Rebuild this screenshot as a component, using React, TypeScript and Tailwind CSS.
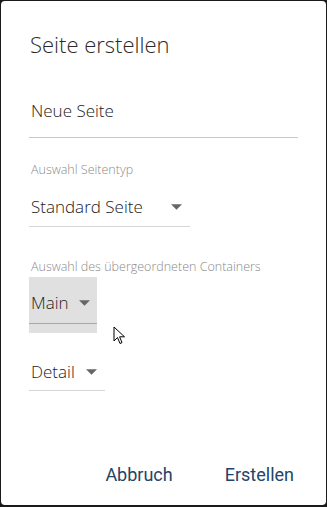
import React from 'react';

function Caret() {
  return (
    <svg width="11" height="6" viewBox="0 0 10 5" className="shrink-0">
      <path d="M0 0 L10 0 L5 5 Z" fill="#666" />
    </svg>
  );
}

export default function App() {
  return (
    <div className="w-[327px] h-[507px] bg-[#1a1a1a] pt-px pl-px pr-px pb-[2px]" style={{ fontFamily: '"Open Sans", sans-serif' }}>
      <div className="relative h-full bg-white rounded-[4px] flex flex-col px-[28px] font-[350]">
        {/* Title */}
        <h1 className="mt-[29px] text-[22px] leading-[28px] text-[#2a2a2a] pl-px font-light">Seite erstellen</h1>

        {/* Name input */}
        <div className="mt-[41px] border-b border-[#c8c8c8] pb-[14px]">
          <div className="text-[17px] leading-[24px] text-[#222] pl-[2px]">Neue Seite</div>
        </div>

        {/* Page type */}
        <div className="mt-[24px] text-[12.5px] leading-[16px] text-[#8a8a8a] pl-[2px]">Auswahl Seitentyp</div>
        <div className="mt-[17px] w-[161px] border-b border-[#d6d6d6] pb-[7px] pr-[8px] flex items-center justify-between">
          <span className="text-[17px] leading-[24px] text-[#222] pl-[2px]">Standard Seite</span>
          <Caret />
        </div>

        {/* Parent container */}
        <div className="mt-[32px] text-[12.5px] leading-[16px] text-[#8a8a8a] pl-[2px]">Auswahl des übergeordneten Containers</div>
        <div className="mt-[2px] w-[68px] h-[56px] bg-[#e0e0e0] flex flex-col">
          <div className="mt-[14px] pr-[7px] flex items-center justify-between">
            <span className="text-[17px] leading-[24px] text-[#222] pl-[2px]">Main</span>
            <Caret />
          </div>
          <div className="mt-[8px] border-b border-[#a8a8a8]" />
        </div>

        <div className="mt-[27px] w-[76px] border-b border-[#d6d6d6] pb-[6px] pr-[8px] flex items-center justify-between">
          <span className="text-[17px] leading-[24px] text-[#222] pl-[2px]">Detail</span>
          <Caret />
        </div>

        {/* Actions */}
        <div className="mt-auto mb-[18px] flex justify-end gap-[52px] pr-[4px] font-normal" style={{ fontFamily: 'Roboto, sans-serif' }}>
          <button className="text-[18px] leading-[24px] text-[#234468]">Abbruch</button>
          <button className="text-[18px] leading-[24px] text-[#234468]">Erstellen</button>
        </div>

        {/* Mouse pointer */}
        <svg className="absolute left-[112px] top-[325px]" width="14" height="20" viewBox="0 0 14 20">
          <path d="M1 1 L1 15 L4.5 11.5 L7 17.5 L9 16.6 L6.6 10.8 L11.5 10.8 Z" fill="#fff" stroke="#000" strokeWidth="1" strokeLinejoin="round" />
        </svg>
      </div>
    </div>
  );
}
